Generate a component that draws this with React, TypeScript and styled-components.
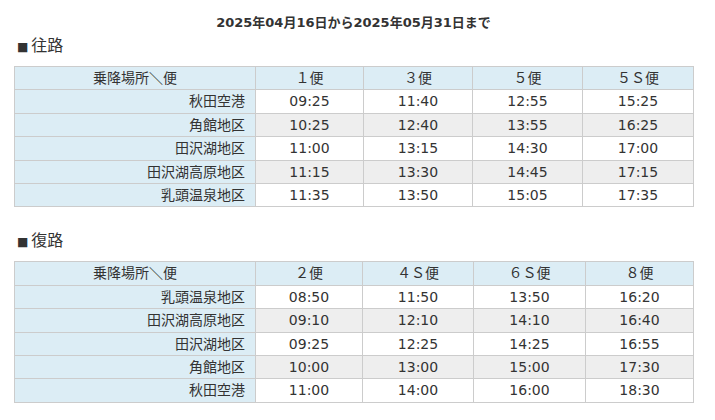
import React from 'react'
import styled, { createGlobalStyle, css } from 'styled-components'

const GlobalStyle = createGlobalStyle`
  body {
    margin: 0;
    background: #fff;
    color: #333;
    font-family: "DejaVu Sans", "Noto Sans CJK JP", sans-serif;
  }
`

const Page = styled.div`
  width: 679px;
  padding: 13px 0 0 14px;
`

const Period = styled.div`
  text-align: center;
  font-size: 13px;
  font-weight: bold;
  line-height: 20px;
  color: #333;
`

const Heading = styled.h2<{ $gap: number }>`
  height: 24px;
  margin: ${(p) => p.$gap}px 0 8px 3px;
  font-size: 16px;
  font-weight: normal;
  line-height: 24px;
  color: #333;
`

const Mark = styled.span`
  font-size: 12px;
  line-height: 0;
  margin-right: 3px;
`

const Table = styled.table`
  width: 679px;
  border-collapse: collapse;
  table-layout: fixed;
  font-size: 14px;
`

const cellBase = css<{ $bg: string }>`
  height: 22.4px;
  padding: 0;
  line-height: 22.4px;
  border: 1px solid #ccc;
  background: ${(p) => p.$bg};
  text-align: center;
  white-space: nowrap;
`

const HeadCell = styled.th<{ $bg: string }>`
  ${cellBase}
  font-weight: normal;
`

const Cell = styled.td<{ $bg: string }>`
  ${cellBase}
`

const StopCell = styled(Cell)`
  text-align: right;
  padding-right: 10px;
`

const BLUE = '#dcedf5'

type Timetable = {
  title: string
  gap: number
  widths: number[]
  flights: string[]
  rows: [string, string[]][]
}

const tables: Timetable[] = [
  {
    title: '往路',
    gap: 1,
    widths: [241, 108, 109, 110, 111],
    flights: ['１便', '３便', '５便', '５Ｓ便'],
    rows: [
      ['秋田空港', ['09:25', '11:40', '12:55', '15:25']],
      ['角館地区', ['10:25', '12:40', '13:55', '16:25']],
      ['田沢湖地区', ['11:00', '13:15', '14:30', '17:00']],
      ['田沢湖高原地区', ['11:15', '13:30', '14:45', '17:15']],
      ['乳頭温泉地区', ['11:35', '13:50', '15:05', '17:35']],
    ],
  },
  {
    title: '復路',
    gap: 22,
    widths: [241, 107, 111, 112, 108],
    flights: ['２便', '４Ｓ便', '６Ｓ便', '８便'],
    rows: [
      ['乳頭温泉地区', ['08:50', '11:50', '13:50', '16:20']],
      ['田沢湖高原地区', ['09:10', '12:10', '14:10', '16:40']],
      ['田沢湖地区', ['09:25', '12:25', '14:25', '16:55']],
      ['角館地区', ['10:00', '13:00', '15:00', '17:30']],
      ['秋田空港', ['11:00', '14:00', '16:00', '18:30']],
    ],
  },
]

const App = () => {
  return (
    <>
      <GlobalStyle />
      <Page>
        <Period>2025年04月16日から2025年05月31日まで</Period>
        {tables.map((t) => (
          <section key={t.title}>
            <Heading $gap={t.gap}>
              <Mark>■</Mark>
              {t.title}
            </Heading>
            <Table>
              <colgroup>
                {t.widths.map((w, i) => (
                  <col key={i} style={{ width: w }} />
                ))}
              </colgroup>
              <thead>
                <tr>
                  <HeadCell $bg={BLUE}>乗降場所＼便</HeadCell>
                  {t.flights.map((f) => (
                    <HeadCell key={f} $bg={BLUE}>{f}</HeadCell>
                  ))}
                </tr>
              </thead>
              <tbody>
                {t.rows.map(([stop, times], r) => (
                  <tr key={stop}>
                    <StopCell $bg={BLUE}>{stop}</StopCell>
                    {times.map((time, i) => (
                      <Cell key={i} $bg={r % 2 ? '#eeeeee' : '#ffffff'}>{time}</Cell>
                    ))}
                  </tr>
                ))}
              </tbody>
            </Table>
          </section>
        ))}
      </Page>
    </>
  )
}

export default App
